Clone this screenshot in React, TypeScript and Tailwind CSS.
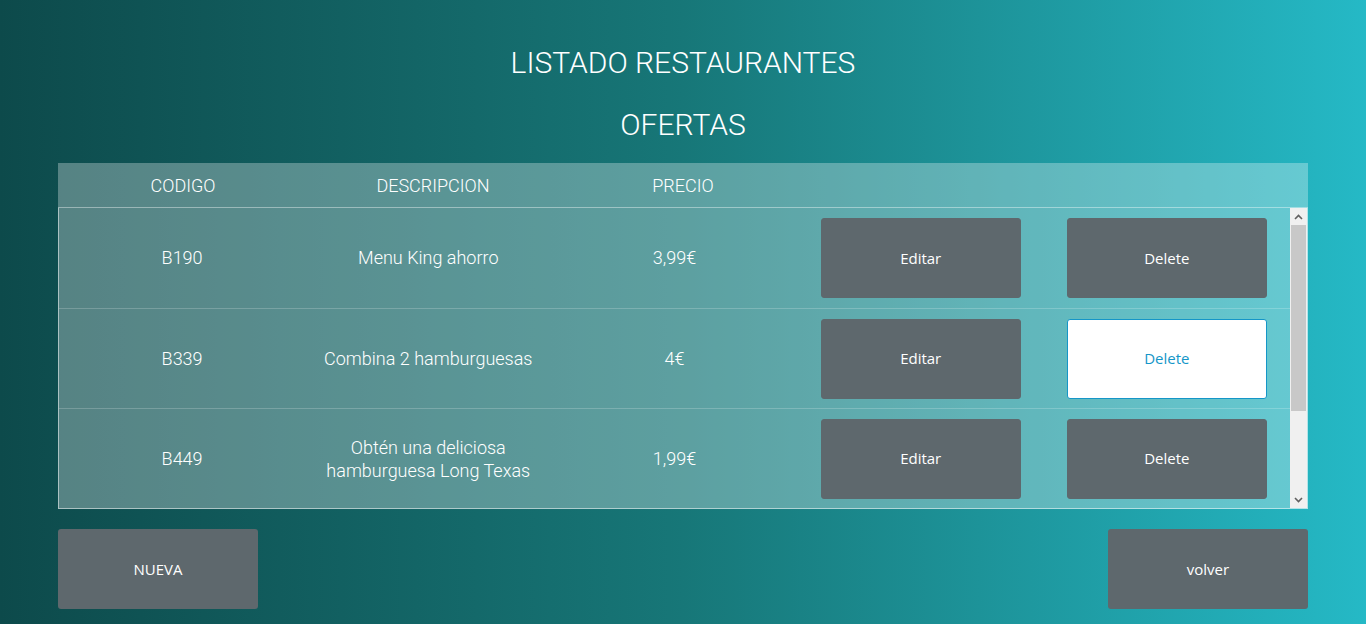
import React from "react"

const rows = [
  { code: "B190", desc: ["Menu King ahorro"], price: "3,99€" },
  { code: "B339", desc: ["Combina 2 hamburguesas"], price: "4€", hot: true },
  { code: "B449", desc: ["Obtén una deliciosa", "hamburguesa Long Texas"], price: "1,99€" },
]

function Btn({ children, hot }: { children: React.ReactNode; hot?: boolean }) {
  return (
    <button
      className={
        hot
          ? "w-[200px] h-[80px] rounded-[3px] bg-white border border-[#1596c8] text-[#1596c8] text-[15px] font-normal font-['Open_Sans',sans-serif]"
          : "w-[200px] h-[80px] rounded-[3px] bg-[#5e686d] border border-[#5e686d] text-white text-[15px] font-normal font-['Open_Sans',sans-serif]"
      }
    >
      {children}
    </button>
  )
}

export default function App() {
  return (
    <div className="w-[1366px] h-[624px] overflow-hidden bg-gradient-to-r from-[#0d4a4b] via-[#177778] to-[#25b9c6] font-['Roboto',sans-serif] font-light text-white">
      <div className="flex flex-col items-center pt-[44px]">
        <h1 className="text-[30px] leading-[38px] font-light">LISTADO RESTAURANTES</h1>
        <h2 className="mt-[24px] text-[30px] leading-[38px] font-light">OFERTAS</h2>
      </div>

      <div className="mx-[58px] mt-[19px]">
        {/* header */}
        <div className="grid grid-cols-5 h-[45px] items-center bg-white/30 text-[18px] text-center border-b border-white/40">
          <span>CODIGO</span>
          <span>DESCRIPCION</span>
          <span>PRECIO</span>
          <span></span>
          <span></span>
        </div>

        {/* body */}
        <div className="flex h-[301px] bg-white/30 border border-t-0 border-white/50">
          <div className="flex-1 flex flex-col">
            {rows.map((r, i) => (
              <div
                key={r.code}
                className={
                  "grid grid-cols-5 items-center text-center text-[18px] " +
                  (i < rows.length - 1 ? "h-[101px] border-b border-white/20" : "h-[99px]")
                }
              >
                <span>{r.code}</span>
                <span className="leading-[23px]">
                  {r.desc.map((d) => (
                    <span key={d} className="block">{d}</span>
                  ))}
                </span>
                <span>{r.price}</span>
                <div className="flex justify-center">
                  <Btn>Editar</Btn>
                </div>
                <div className="flex justify-center">
                  <Btn hot={r.hot}>Delete</Btn>
                </div>
              </div>
            ))}
          </div>
          {/* scrollbar */}
          <div className="w-[17px] bg-[#f0f0f0] flex flex-col">
            <div className="h-[17px] flex items-center justify-center">
              <svg width="9" height="6" viewBox="0 0 9 6"><path d="M1 5 L4.5 1.5 L8 5" stroke="#606060" strokeWidth="1.6" fill="none" /></svg>
            </div>
            <div className="mx-[1px] h-[186px] bg-[#c8c8c8]"></div>
            <div className="flex-1"></div>
            <div className="h-[17px] flex items-center justify-center">
              <svg width="9" height="6" viewBox="0 0 9 6"><path d="M1 1 L4.5 4.5 L8 1" stroke="#606060" strokeWidth="1.6" fill="none" /></svg>
            </div>
          </div>
        </div>

        <div className="flex justify-between mt-[20px]">
          <button className="w-[200px] h-[80px] rounded-[3px] bg-[#5e686d] text-white text-[15px] font-['Open_Sans',sans-serif] font-medium">NUEVA</button>
          <button className="w-[200px] h-[80px] rounded-[3px] bg-[#5e686d] text-white text-[15px] font-['Open_Sans',sans-serif] font-normal">volver</button>
        </div>
      </div>
    </div>
  )
}
